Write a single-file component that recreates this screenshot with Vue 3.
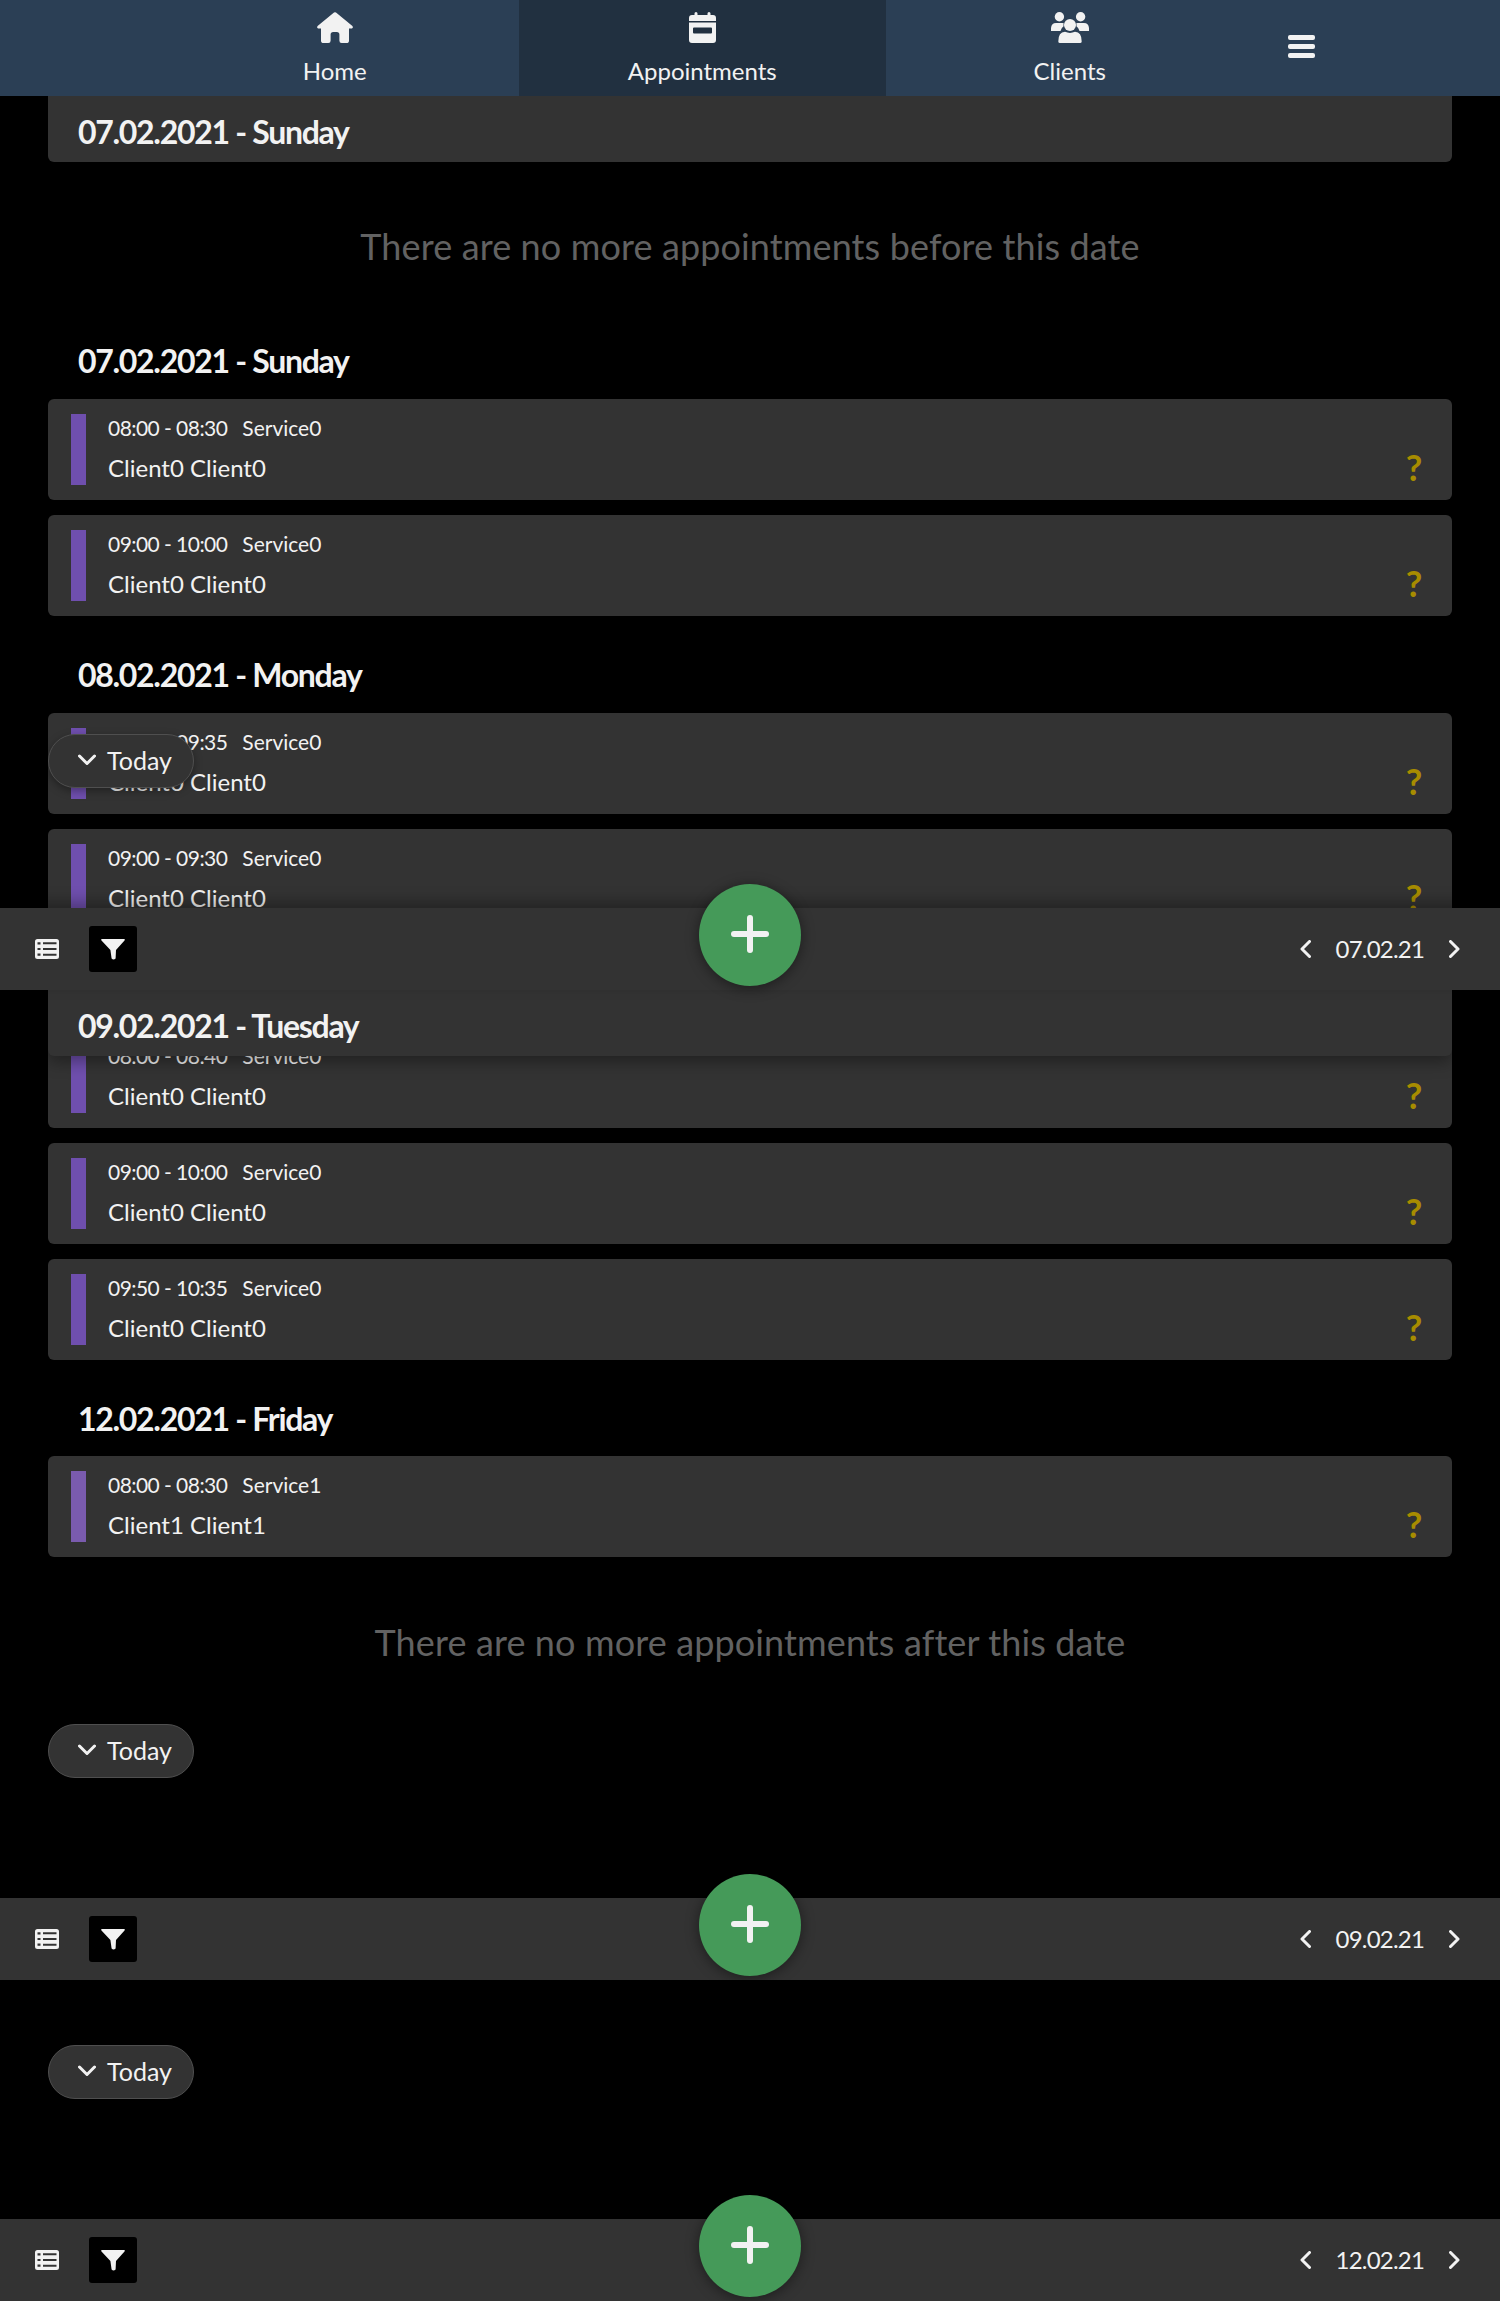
<template>
  <div class="page">
    <nav class="nav">
      <a v-for="tab in tabs" :key="tab.label" class="tab" :class="{ active: tab.active }">
        <svg v-if="tab.icon === 'home'" class="tab-icon" width="36" height="31" viewBox="0 0 36 31">
          <path d="M17 .5Q18 0 19 .5L35.4 13.9Q36.6 15.6 34.8 16.6H32V28.4Q32 31 29.4 31H24.6Q22.4 31 22.4 28.8V22.6Q22.4 20 19.8 20H16.2Q13.6 20 13.6 22.6V28.8Q13.6 31 11.4 31H6.6Q4 31 4 28.4V16.6H1.2Q-.6 15.6 .6 13.9Z" />
        </svg>
        <svg v-else-if="tab.icon === 'calendar'" class="tab-icon" width="27" height="31" viewBox="0 0 27 31">
          <path d="M5.5 1.5a1.5 1.5 0 0 1 3 0V3h10V1.5a1.5 1.5 0 0 1 3 0V3H24q3 0 3 3V9H0V6q0-3 3-3h2.5Z" />
          <path fill-rule="evenodd" d="M0 10.5H27V28q0 3-3 3H3q-3 0-3-3ZM5 15.5q-1 0-1 1v4q0 1 1 1H22q1 0 1-1v-4q0-1-1-1Z" />
        </svg>
        <svg v-else class="tab-icon" width="38" height="31" viewBox="0 0 38 31">
          <circle cx="8.4" cy="4.8" r="4.7" />
          <circle cx="29.6" cy="4.8" r="4.7" />
          <path d="M0 19V16Q.5 11 5 11H11.5Q13.5 11 14 13Q11 15 9.5 19Z" />
          <path d="M38 19V16Q37.5 11 33 11H26.5Q24.500 11 24 13Q27 15 28.500 19Z" />
          <g class="front">
            <circle cx="19" cy="13" r="6" />
            <path d="M7.300 29.500Q7.300 20 14 19.800Q19 22 24 19.800Q30.700 20 30.700 29.500Q30.700 31 29 31H9Q7.300 31 7.300 29.500Z" />
          </g>
        </svg>
        <span class="tab-label">{{ tab.label }}</span>
      </a>
      <div class="burger">
        <span></span><span></span><span></span>
      </div>
    </nav>

    <div class="list">
      <h2 class="day stuck">07.02.2021 - Sunday</h2>
      <p class="end-note first">There are no more appointments before this date</p>

      <section v-for="group in groups" :key="group.day">
        <h2 class="day">{{ group.day }}</h2>
        <div v-for="(item, i) in group.items" :key="i" class="card">
          <span class="mark" :class="{ light: item.light }"></span>
          <div class="info">
            <div class="when">
              <span class="time">{{ item.time }}</span><span>{{ item.service }}</span>
            </div>
            <div class="who">{{ item.client }}</div>
          </div>
          <span class="status">?</span>
        </div>
      </section>

      <p class="end-note last">There are no more appointments after this date</p>
    </div>

    <!-- the first dock floats over the list, with the stuck header under it -->
    <div class="floating">
      <div class="dock">
        <button class="today">
          <svg width="18" height="12" viewBox="0 0 18 12"><path d="M1.500 2 9 9.500 16.500 2" /></svg>
          <span>Today</span>
        </button>
        <div class="bar">
          <div class="bar-left">
            <svg class="list-icon" width="24" height="20" viewBox="0 0 24 20"><path fill-rule="evenodd" :d="listPath" /></svg>
            <span class="filter">
              <svg width="24" height="21" viewBox="0 0 24 21"><path :d="filterPath" /></svg>
            </span>
          </div>
          <button class="fab"><span class="plus"></span></button>
          <div class="pager">
            <svg width="11" height="18" viewBox="0 0 11 18"><path d="M9.500 1.500 2 9l7.500 7.500" /></svg>
            <span class="pager-date">{{ docks[0] }}</span>
            <svg width="11" height="18" viewBox="0 0 11 18"><path d="M1.500 1.500 9 9l-7.500 7.500" /></svg>
          </div>
        </div>
      </div>
      <h2 class="day stuck shadowed">09.02.2021 - Tuesday</h2>
    </div>

    <div v-for="date in docks.slice(1)" :key="date" class="dock in-flow">
      <button class="today">
        <svg width="18" height="12" viewBox="0 0 18 12"><path d="M1.500 2 9 9.500 16.500 2" /></svg>
        <span>Today</span>
      </button>
      <div class="bar">
        <div class="bar-left">
          <svg class="list-icon" width="24" height="20" viewBox="0 0 24 20"><path fill-rule="evenodd" :d="listPath" /></svg>
          <span class="filter">
            <svg width="24" height="21" viewBox="0 0 24 21"><path :d="filterPath" /></svg>
          </span>
        </div>
        <button class="fab"><span class="plus"></span></button>
        <div class="pager">
          <svg width="11" height="18" viewBox="0 0 11 18"><path d="M9.500 1.500 2 9l7.500 7.500" /></svg>
          <span class="pager-date">{{ date }}</span>
          <svg width="11" height="18" viewBox="0 0 11 18"><path d="M1.500 1.500 9 9l-7.500 7.500" /></svg>
        </div>
      </div>
    </div>
  </div>
</template>

<script setup>
const tabs = [
  { label: "Home", icon: "home" },
  { label: "Appointments", icon: "calendar", active: true },
  { label: "Clients", icon: "users" },
];

const appt = (time, service = "Service0", client = "Client0 Client0", light = false) => ({
  time,
  service,
  client,
  light,
});

const groups = [
  { day: "07.02.2021 - Sunday", items: [appt("08:00 - 08:30"), appt("09:00 - 10:00")] },
  { day: "08.02.2021 - Monday", items: [appt("09:00 - 09:35"), appt("09:00 - 09:30")] },
  {
    day: "09.02.2021 - Tuesday",
    items: [appt("08:00 - 08:40"), appt("09:00 - 10:00"), appt("09:50 - 10:35")],
  },
  { day: "12.02.2021 - Friday", items: [appt("08:00 - 08:30", "Service1", "Client1 Client1", true)] },
];

const docks = ["07.02.21", "09.02.21", "12.02.21"];

const listPath =
  "M2.500 0H21.500Q24 0 24 2.500V17.500Q24 20 21.500 20H2.500Q0 20 0 17.500V2.500Q0 0 2.500 0ZM8 3.300V5.300H21.500V3.300ZM8 9V11H21.500V9ZM8 14.700V16.700H21.500V14.700ZM2.500 3.200V5.400H5.500V3.200ZM2.500 8.900V11.100H5.500V8.900ZM2.500 14.600V16.800H5.500V14.600Z";
const filterPath =
  "M1.200 0H22.800Q24.600 0 23.500 1.600L15 11L14.600 19.500Q12.500 21.500 10.600 19.500L9.400 11L.5 1.600Q-.6 0 1.200 0Z";
</script>

<style>
html,
body {
  margin: 0;
  background: #000;
}
</style>

<style scoped>
.page {
  position: relative;
  width: 1500px;
  height: 2301px;
  overflow: hidden;
  background: #000;
  color: #f2f2f2;
  font-family: "Lato", "Noto Sans", sans-serif;
}

.nav {
  display: flex;
  height: 96px;
  padding-left: 151px;
  background: #2b3f55;
}
.tab {
  display: flex;
  flex-direction: column;
  align-items: center;
  width: 367.5px;
  padding-top: 12px;
  box-sizing: border-box;
}
.tab.active {
  background: #213040;
}
.tab-icon {
  fill: #f2f2f2;
  display: block;
}
.tab-icon .front {
  stroke: #2b3f55;
  stroke-width: 1.2;
  paint-order: stroke;
}
.tab-label {
  margin-top: 13px;
  font-size: 24px;
  line-height: 30px;
}
.burger {
  flex: 0 0 95px;
  display: flex;
  flex-direction: column;
  align-items: center;
  justify-content: center;
  gap: 4px;
  padding-bottom: 3px;
  box-sizing: border-box;
}
.burger span {
  width: 27px;
  height: 5px;
  border-radius: 2px;
  background: #f2f2f2;
}

.list {
  padding: 0 48px;
}
h2.day {
  margin: 0;
  padding: 0 30px;
  height: 97px;
  box-sizing: border-box;
  padding-top: 40px;
  font-size: 32px;
  line-height: 38px;
  font-weight: 700;
  letter-spacing: -1.3px;
}
section:last-of-type h2.day {
  height: 96px;
}
h2.day.stuck {
  height: 66px;
  padding-top: 17px;
  background: #333;
  border-radius: 0 0 6px 6px;
}
.shadowed {
  margin: 0 48px !important;
  box-shadow: 0 6px 16px rgba(0, 0, 0, 0.35);
}

.end-note {
  margin: 0;
  color: #626262;
  font-size: 36px;
  line-height: 60px;
  letter-spacing: 0.12px;
  text-align: center;
}
.end-note.first {
  margin: 54px 0 26px;
}
.end-note.last {
  margin: 55px 0 52px;
}

.card {
  display: flex;
  align-items: stretch;
  height: 101px;
  box-sizing: border-box;
  padding: 15px 0 15px 23px;
  margin-bottom: 15px;
  background: #333;
  border-radius: 6px;
}
.card:last-child {
  margin-bottom: 0;
}
.mark {
  width: 15px;
  background: #6f4fae;
}
.mark.light {
  background: #7a5bae;
}
.info {
  flex: 1;
  padding-left: 22px;
}
.when {
  display: flex;
  gap: 15px;
  font-size: 21px;
  line-height: 28px;
}
.time {
  letter-spacing: -0.55px;
}
.who {
  margin-top: 11px;
  font-size: 24px;
  line-height: 30px;
}
.status {
  align-self: flex-end;
  width: 60px;
  margin-right: 8px;
  color: #a78c00;
  font-size: 36px;
  font-weight: 700;
  line-height: 36px;
  text-align: center;
}

.floating {
  position: absolute;
  top: 734px;
  left: 0;
  right: 0;
}
.dock {
  display: flex;
  flex-direction: column;
  height: 256px;
}
.dock.in-flow {
  margin-bottom: 65px;
}
.today {
  display: flex;
  align-items: center;
  gap: 11px;
  width: 146px;
  height: 54px;
  margin-left: 48px;
  padding: 0 0 2px 29px;
  box-sizing: border-box;
  border: 1px solid #4f4f4f;
  border-radius: 27px;
  background: #333;
  color: #f2f2f2;
  font: inherit;
  font-size: 25px;
  box-shadow: 0 3px 8px rgba(0, 0, 0, 0.35);
}
.today svg path,
.pager svg path {
  fill: none;
  stroke: #f2f2f2;
  stroke-width: 3;
  stroke-linecap: round;
  stroke-linejoin: round;
}
.bar {
  position: relative;
  display: flex;
  align-items: center;
  justify-content: space-between;
  height: 82px;
  margin-top: auto;
  background: #333;
  box-shadow: 0 -6px 14px rgba(0, 0, 0, 0.3);
}
.bar-left {
  display: flex;
  align-items: center;
  gap: 30px;
  padding-left: 35px;
}
.list-icon {
  fill: #f2f2f2;
}
.filter {
  display: flex;
  align-items: center;
  justify-content: center;
  width: 48px;
  height: 46px;
  background: #000;
  border-radius: 3px;
}
.filter svg {
  fill: #f2f2f2;
}
.fab {
  position: absolute;
  top: -24px;
  left: 699px;
  width: 102px;
  height: 102px;
  padding: 0;
  border: 0;
  border-radius: 50%;
  background: #459a59;
  box-shadow: 0 2px 14px rgba(0, 0, 0, 0.45);
}
.plus {
  display: block;
  position: relative;
  width: 38px;
  height: 38px;
  margin: -3px auto 0;
}
.plus::before,
.plus::after {
  content: "";
  position: absolute;
  background: #f2f2f2;
  border-radius: 3px;
}
.plus::before {
  left: 16px;
  top: 0;
  width: 6px;
  height: 38px;
}
.plus::after {
  left: 0;
  top: 16px;
  width: 38px;
  height: 6px;
}
.pager {
  display: flex;
  align-items: center;
  gap: 25px;
  padding-right: 40px;
  font-size: 24px;
}
.pager-date {
  letter-spacing: -0.8px;
  margin-top: -2px;
}
</style>
